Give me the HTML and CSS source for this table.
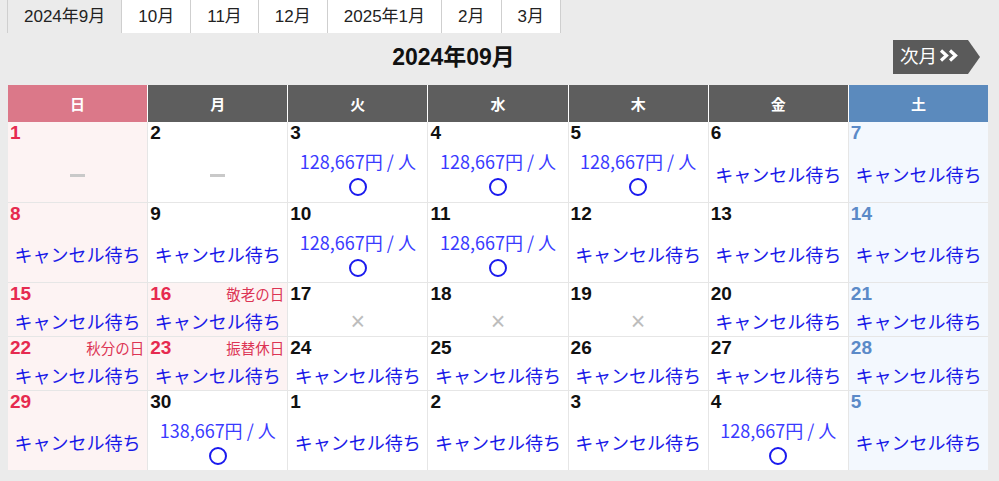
FILE: index.html
```html
<!DOCTYPE html>
<html lang="ja">
<head>
<meta charset="utf-8">
<title>カレンダー</title>
<link rel="stylesheet" href="styles.css">
</head>
<body>
<div class="page">
  <ul class="tabs">
    <li class="tab active">2024年9月</li>
    <li class="tab">10月</li>
    <li class="tab">11月</li>
    <li class="tab">12月</li>
    <li class="tab">2025年1月</li>
    <li class="tab">2月</li>
    <li class="tab">3月</li>
  </ul>
  <div class="titlebar">
    <h1 class="title">2024年09月</h1>
    <a class="next">次月<svg class="chev" width="20" height="13" viewBox="0 0 20 13"><polyline points="2,1.5 7.5,6.5 2,11.5" fill="none" stroke="#fff" stroke-width="3.2"/><polyline points="11,1.5 16.5,6.5 11,11.5" fill="none" stroke="#fff" stroke-width="3.2"/></svg></a>
  </div>
  <div class="head">
    <div class="hc sun">日</div>
    <div class="hc">月</div>
    <div class="hc">火</div>
    <div class="hc">水</div>
    <div class="hc">木</div>
    <div class="hc">金</div>
    <div class="hc sat">土</div>
  </div>
  <div class="grid">
    <!-- week 1 -->
    <div class="cell sun"><div class="top"><span class="num">1</span></div><div class="body"><span class="dash"></span></div></div>
    <div class="cell"><div class="top"><span class="num">2</span></div><div class="body"><span class="dash"></span></div></div>
    <div class="cell"><div class="top"><span class="num">3</span></div><div class="body"><span class="price">128,667円 / 人</span><span class="ok"></span></div></div>
    <div class="cell"><div class="top"><span class="num">4</span></div><div class="body"><span class="price">128,667円 / 人</span><span class="ok"></span></div></div>
    <div class="cell"><div class="top"><span class="num">5</span></div><div class="body"><span class="price">128,667円 / 人</span><span class="ok"></span></div></div>
    <div class="cell"><div class="top"><span class="num">6</span></div><div class="body"><span class="wait">キャンセル待ち</span></div></div>
    <div class="cell sat"><div class="top"><span class="num">7</span></div><div class="body"><span class="wait">キャンセル待ち</span></div></div>
    <!-- week 2 -->
    <div class="cell sun"><div class="top"><span class="num">8</span></div><div class="body"><span class="wait">キャンセル待ち</span></div></div>
    <div class="cell"><div class="top"><span class="num">9</span></div><div class="body"><span class="wait">キャンセル待ち</span></div></div>
    <div class="cell"><div class="top"><span class="num">10</span></div><div class="body"><span class="price">128,667円 / 人</span><span class="ok"></span></div></div>
    <div class="cell"><div class="top"><span class="num">11</span></div><div class="body"><span class="price">128,667円 / 人</span><span class="ok"></span></div></div>
    <div class="cell"><div class="top"><span class="num">12</span></div><div class="body"><span class="wait">キャンセル待ち</span></div></div>
    <div class="cell"><div class="top"><span class="num">13</span></div><div class="body"><span class="wait">キャンセル待ち</span></div></div>
    <div class="cell sat"><div class="top"><span class="num">14</span></div><div class="body"><span class="wait">キャンセル待ち</span></div></div>
    <!-- week 3 -->
    <div class="cell sun"><div class="top"><span class="num">15</span></div><div class="body"><span class="wait">キャンセル待ち</span></div></div>
    <div class="cell hol"><div class="top"><span class="num">16</span><span class="holname">敬老の日</span></div><div class="body"><span class="wait">キャンセル待ち</span></div></div>
    <div class="cell"><div class="top"><span class="num">17</span></div><div class="body"><span class="ng">×</span></div></div>
    <div class="cell"><div class="top"><span class="num">18</span></div><div class="body"><span class="ng">×</span></div></div>
    <div class="cell"><div class="top"><span class="num">19</span></div><div class="body"><span class="ng">×</span></div></div>
    <div class="cell"><div class="top"><span class="num">20</span></div><div class="body"><span class="wait">キャンセル待ち</span></div></div>
    <div class="cell sat"><div class="top"><span class="num">21</span></div><div class="body"><span class="wait">キャンセル待ち</span></div></div>
    <!-- week 4 -->
    <div class="cell sun"><div class="top"><span class="num">22</span><span class="holname">秋分の日</span></div><div class="body"><span class="wait">キャンセル待ち</span></div></div>
    <div class="cell hol"><div class="top"><span class="num">23</span><span class="holname">振替休日</span></div><div class="body"><span class="wait">キャンセル待ち</span></div></div>
    <div class="cell"><div class="top"><span class="num">24</span></div><div class="body"><span class="wait">キャンセル待ち</span></div></div>
    <div class="cell"><div class="top"><span class="num">25</span></div><div class="body"><span class="wait">キャンセル待ち</span></div></div>
    <div class="cell"><div class="top"><span class="num">26</span></div><div class="body"><span class="wait">キャンセル待ち</span></div></div>
    <div class="cell"><div class="top"><span class="num">27</span></div><div class="body"><span class="wait">キャンセル待ち</span></div></div>
    <div class="cell sat"><div class="top"><span class="num">28</span></div><div class="body"><span class="wait">キャンセル待ち</span></div></div>
    <!-- week 5 -->
    <div class="cell sun"><div class="top"><span class="num">29</span></div><div class="body"><span class="wait">キャンセル待ち</span></div></div>
    <div class="cell"><div class="top"><span class="num">30</span></div><div class="body"><span class="price">138,667円 / 人</span><span class="ok"></span></div></div>
    <div class="cell"><div class="top"><span class="num">1</span></div><div class="body"><span class="wait">キャンセル待ち</span></div></div>
    <div class="cell"><div class="top"><span class="num">2</span></div><div class="body"><span class="wait">キャンセル待ち</span></div></div>
    <div class="cell"><div class="top"><span class="num">3</span></div><div class="body"><span class="wait">キャンセル待ち</span></div></div>
    <div class="cell"><div class="top"><span class="num">4</span></div><div class="body"><span class="price">128,667円 / 人</span><span class="ok"></span></div></div>
    <div class="cell sat"><div class="top"><span class="num">5</span></div><div class="body"><span class="wait">キャンセル待ち</span></div></div>
  </div>
</div>
</body>
</html>
```
FILE: styles.css
```css
html, body {
  margin: 0;
  padding: 0;
  background: #ebebeb;
}
body {
  font-family: "Liberation Sans", "Noto Sans CJK JP", sans-serif;
  color: #111;
}
.page {
  width: 980px;
  margin-left: 8px;
}
.tabs {
  list-style: none;
  margin: 0 0 0 -1px;
  padding: 0;
  display: flex;
  height: 33px;
}
.tab {
  background: #fff;
  border-right: 1px solid #cfcfcf;
  font-size: 17px;
  line-height: 33px;
  padding: 0 16px;
  color: #222;
}
.tab.active {
  background: #ebebeb;
  border-left: 1px solid #cfcfcf;
}
.titlebar {
  display: flex;
  align-items: center;
  margin-top: 7px;
  height: 34px;
  margin-bottom: 11px;
}
.title {
  flex: 1;
  margin: 0;
  text-align: center;
  font-size: 23px;
  line-height: 28px;
  font-weight: bold;
  padding-left: 6px;
}
.next {
  display: flex;
  align-items: center;
  height: 34px;
  width: 87px;
  box-sizing: border-box;
  padding: 0 0 5px 7px;
  margin-right: 8px;
  background: #5a5a5a;
  color: #fff;
  font-family: "Noto Sans CJK JP", sans-serif;
  font-size: 18.5px;
  line-height: 28px;
  clip-path: polygon(0 0, 75px 0, 100% 50%, 75px 100%, 0 100%);
}
.chev {
  margin-left: 2px;
  margin-top: 2px;
}
.head {
  display: grid;
  grid-template-columns: repeat(7, 1fr);
  column-gap: 1px;
  background: #fff;
  height: 37px;
}
.hc {
  background: #5e5e5e;
  color: #fff;
  font-weight: bold;
  font-size: 15px;
  display: flex;
  align-items: center;
  justify-content: center;
}
.hc.sun { background: #db7889; }
.hc.sat { background: #5b8abd; }
.grid {
  display: grid;
  grid-template-columns: repeat(7, 1fr);
  grid-template-rows: 80px 79px 53px 53px 79px;
  gap: 1px;
  background: #e6e6e6;
}
.cell {
  background: #fff;
  display: flex;
  flex-direction: column;
}
.cell.sun, .cell.hol { background: #fdf3f3; }
.cell.sat { background: #f3f8fe; }
.top {
  height: 24px;
  display: flex;
  justify-content: space-between;
  align-items: flex-start;
  padding: 0 3px 0 2px;
}
.num {
  font-weight: bold;
  font-size: 19px;
  line-height: 22px;
  color: #111;
}
.sun .num, .hol .num { color: #e62a4f; }
.sat .num { color: #5b8ac8; }
.holname {
  font-family: "Noto Sans CJK JP", sans-serif;
  font-size: 14.5px;
  line-height: 22px;
  color: #dc3454;
}
.body {
  flex: 1;
  display: flex;
  flex-direction: column;
  align-items: center;
  justify-content: center;
  font-family: "Noto Sans CJK JP", sans-serif;
  font-size: 18px;
  line-height: 25px;
}
.wait { color: #1a1ae8; }
.price { color: #3a3aff; }
.ok {
  width: 14px;
  height: 14px;
  border: 2px solid #1a1aee;
  border-radius: 50%;
  margin: 4px 0 3px;
}
.dash {
  width: 15px;
  height: 3px;
  margin-top: 3px;
  background: #c9c9c9;
}
.ng {
  font-family: "Liberation Sans", sans-serif;
  font-size: 25px;
  line-height: 25px;
  color: #bdbdbd;
}
```
